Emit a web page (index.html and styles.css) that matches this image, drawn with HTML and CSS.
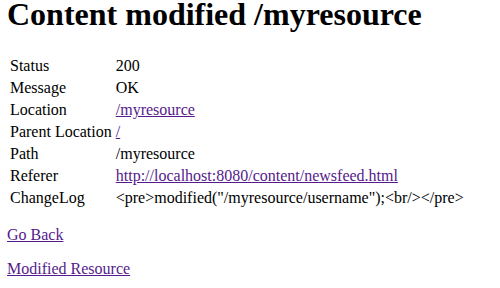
FILE: index.html
```html
<!DOCTYPE html>
<html lang="en">
<head>
  <meta charset="UTF-8">
  <title>Content modified /myresource</title>
  <link rel="stylesheet" href="styles.css">
</head>
<body>
  <h1>Content modified /myresource</h1>
  <table class="info">
    <tbody>
      <tr><td>Status</td><td>200</td></tr>
      <tr><td>Message</td><td>OK</td></tr>
      <tr><td>Location</td><td><a href="#">/myresource</a></td></tr>
      <tr><td>Parent Location</td><td><a href="#">/</a></td></tr>
      <tr><td>Path</td><td>/myresource</td></tr>
      <tr><td>Referer</td><td><a href="#">http://localhost:8080/content/newsfeed.html</a></td></tr>
      <tr><td>ChangeLog</td><td>&lt;pre&gt;modified("/myresource/username");&lt;br/&gt;&lt;/pre&gt;</td></tr>
    </tbody>
  </table>
  <p><a href="#">Go Back</a></p>
  <p><a href="#">Modified Resource</a></p>
</body>
</html>
```

FILE: styles.css
```css
body {
  margin: 0 8px 8px 7px;
  font-family: "Liberation Serif", "Times New Roman", serif;
  font-size: 16px;
  color: #000;
  background: #fff;
}
h1 {
  font-size: 32px;
  line-height: 29px;
  margin: 0 0 25px;
}
.info {
  border-spacing: 2px;
}
.info td {
  padding: 1px;
  white-space: nowrap;
}
a {
  color: #551a8b;
}
```
